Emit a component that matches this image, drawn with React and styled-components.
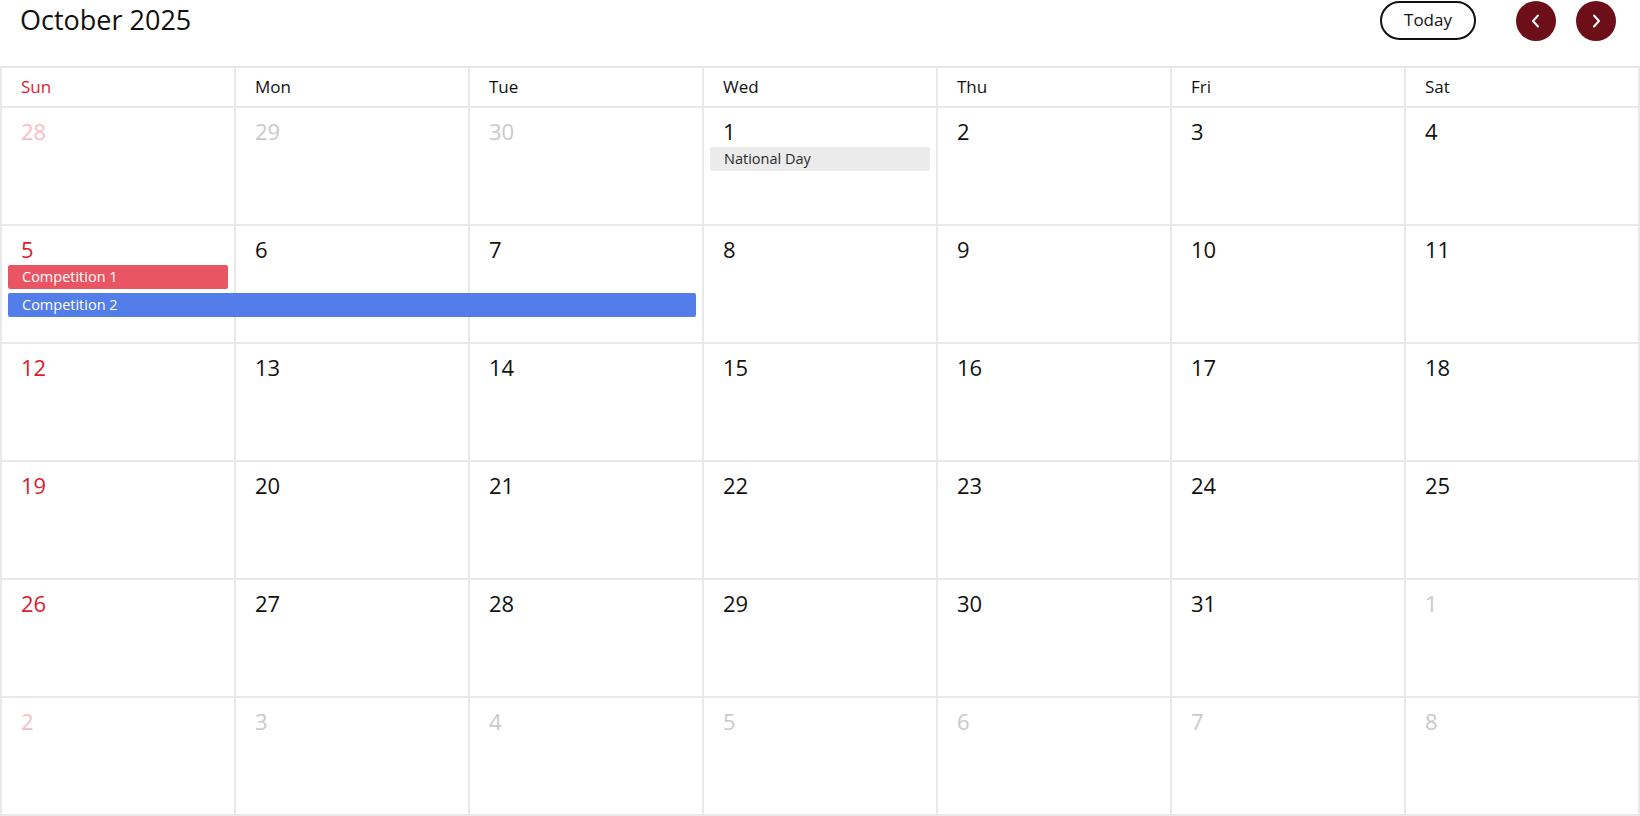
import React from "react";
import styled, { createGlobalStyle } from "styled-components";

const GlobalStyle = createGlobalStyle`
  html, body { margin: 0; padding: 0; background: #ffffff; }
  body { font-family: "Open Sans", "Noto Sans", sans-serif; color: #111; }
  * { box-sizing: border-box; }
`;

const Page = styled.div`
  width: 1640px;
  height: 816px;
  display: flex;
  flex-direction: column;
  overflow: hidden;
`;

const Toolbar = styled.header`
  height: 66px;
  display: flex;
  align-items: flex-start;
  padding: 0 24px 0 20px;
`;

const Title = styled.h1`
  margin: 0;
  flex: 1;
  font-size: 27px;
  font-weight: 400;
  line-height: 40px;
  color: #111;
`;

const TodayButton = styled.button`
  width: 96px;
  height: 39px;
  margin-top: 1px;
  margin-right: 40px;
  border: 2px solid #111;
  border-radius: 20px;
  background: #fff;
  font-family: inherit;
  font-size: 17px;
  color: #111;
  padding: 0 0 2px;
  cursor: pointer;
`;

const NavButton = styled.button`
  width: 40px;
  height: 40px;
  margin-top: 1px;
  margin-left: ${(p) => (p.$first ? "0" : "20px")};
  border: none;
  border-radius: 50%;
  background: #6c0f18;
  display: flex;
  align-items: center;
  justify-content: center;
  padding: 0;
  cursor: pointer;
`;

const Grid = styled.div`
  border-top: 2px solid #e8e8e8;
  border-left: 2px solid #e8e8e8;
  display: flex;
  flex-direction: column;
`;

const HeaderRow = styled.div`
  display: grid;
  grid-template-columns: repeat(7, 234px);
  height: 40px;
`;

const DayName = styled.div`
  border-right: 2px solid #e8e8e8;
  border-bottom: 2px solid #e8e8e8;
  padding-left: 19px;
  font-size: 17px;
  line-height: 37px;
  color: ${(p) => (p.$sun ? "#dd1c2d" : "#111")};
`;

const WeekRow = styled.div`
  display: grid;
  grid-template-columns: repeat(7, 234px);
  grid-template-rows: 39px 28px 24px 1fr;
  height: 118px;
`;

const Cell = styled.div`
  grid-row: 1 / -1;
  grid-column: ${(p) => p.$col};
  border-right: 2px solid #e8e8e8;
  border-bottom: 2px solid #e8e8e8;
  padding: 8px 0 0 19px;
`;

const DayNum = styled.span`
  font-size: 22px;
  line-height: 30px;
  color: ${(p) =>
    p.$other ? (p.$sun ? "#f7bcc3" : "#c9c9c9") : p.$sun ? "#dd1c2d" : "#111"};
`;

const EventBar = styled.div`
  grid-row: ${(p) => p.$lane + 2};
  grid-column: ${(p) => p.$col} / span ${(p) => p.$span};
  align-self: start;
  height: 24px;
  margin: 0 8px 0 6px;
  border-radius: 2px;
  padding-left: 14px;
  font-size: 14.5px;
  line-height: 23px;
  white-space: nowrap;
  overflow: hidden;
  background: ${(p) => p.$bg};
  color: ${(p) => p.$fg};
`;

const Chevron = ({ dir }) => (
  <svg width="16" height="16" viewBox="0 0 16 16" fill="none">
    <path
      d={dir === "left" ? "M10 2.5 L5 8 L10 13.5" : "M6 2.5 L11 8 L6 13.5"}
      stroke="#fff"
      strokeWidth="2"
      strokeLinecap="round"
      strokeLinejoin="round"
    />
  </svg>
);

const dayNames = ["Sun", "Mon", "Tue", "Wed", "Thu", "Fri", "Sat"];

const buildWeeks = () => {
  const days = [];
  [28, 29, 30].forEach((d) => days.push({ d, other: true }));
  for (let d = 1; d <= 31; d++) days.push({ d, other: false });
  for (let d = 1; days.length < 42; d++) days.push({ d, other: true });
  const weeks = [];
  for (let i = 0; i < 6; i++) weeks.push(days.slice(i * 7, i * 7 + 7));
  return weeks;
};

const events = {
  0: [{ col: 4, span: 1, lane: 0, title: "National Day", bg: "#ebebeb", fg: "#2a2a2a" }],
  1: [
    { col: 1, span: 1, lane: 0, title: "Competition 1", bg: "#e95562", fg: "#ffffff" },
    { col: 1, span: 3, lane: 1, title: "Competition 2", bg: "#537de8", fg: "#ffffff" },
  ],
};

export default function App() {
  const weeks = buildWeeks();
  return (
    <Page>
      <GlobalStyle />
      <Toolbar>
        <Title>October 2025</Title>
        <TodayButton>Today</TodayButton>
        <NavButton $first aria-label="Previous">
          <Chevron dir="left" />
        </NavButton>
        <NavButton aria-label="Next">
          <Chevron dir="right" />
        </NavButton>
      </Toolbar>
      <Grid>
        <HeaderRow>
          {dayNames.map((n, i) => (
            <DayName key={n} $sun={i === 0}>
              {n}
            </DayName>
          ))}
        </HeaderRow>
        {weeks.map((week, wi) => (
          <WeekRow key={wi}>
            {week.map((day, di) => (
              <Cell key={di} $col={di + 1}>
                <DayNum $sun={di === 0} $other={day.other}>
                  {day.d}
                </DayNum>
              </Cell>
            ))}
            {(events[wi] || []).map((ev) => (
              <EventBar
                key={ev.title}
                $col={ev.col}
                $span={ev.span}
                $lane={ev.lane}
                $bg={ev.bg}
                $fg={ev.fg}
              >
                {ev.title}
              </EventBar>
            ))}
          </WeekRow>
        ))}
      </Grid>
    </Page>
  );
}
